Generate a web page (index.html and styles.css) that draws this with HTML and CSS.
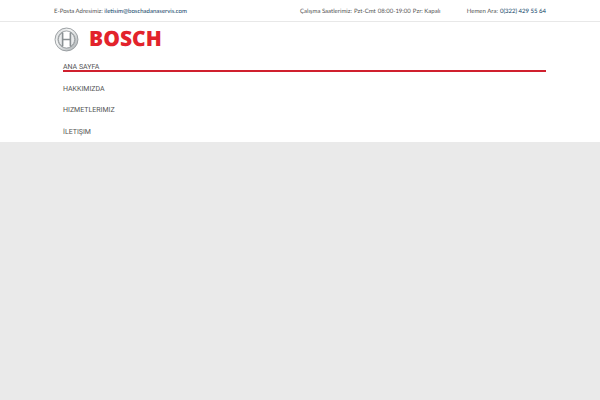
FILE: index.html
```
<!DOCTYPE html>
<html lang="tr">
<head>
<meta charset="utf-8">
<meta name="viewport" content="width=device-width, initial-scale=1">
<title>Bosch Adana Servis</title>
<link rel="stylesheet" href="styles.css">
</head>
<body>
<div class="topbar">
  <div class="container topbar-row">
    <p>E-Posta Adresimiz: <a href="mailto:iletisim@boschadanaservis.com">iletisim@boschadanaservis.com</a></p>
    <div class="topbar-info">
      <p class="spaced"><span>Çalışma Saatlerimiz:</span> <span>Pzt-Cmt</span> <span>08:00-19:00</span> <span>Pzr: Kapalı</span></p>
      <p class="spaced"><span>Hemen Ara:</span> <a href="tel:03224295564">0(322) 429 55 64</a></p>
    </div>
  </div>
</div>
<header class="header">
  <div class="container">
    <a class="logo" href="#">
      <svg class="emblem" viewBox="0 0 48 48" aria-hidden="true">
        <defs>
          <linearGradient id="metal" x1="0" y1="0" x2="1" y2="1">
            <stop offset="0" stop-color="#c9cdcf"/>
            <stop offset=".35" stop-color="#f7f8f8"/>
            <stop offset="1" stop-color="#a5abae"/>
          </linearGradient>
        </defs>
        <circle cx="24" cy="24" r="22" fill="url(#metal)" stroke="#8d9295" stroke-width="1.6"/>
        <circle cx="24" cy="24" r="16.5" fill="#fff" stroke="#8d9295" stroke-width="1.6"/>
        <path d="M16.5 10.5C11 14 8.500 19 8.500 24s2.500 10 8 13.500zM31.500 10.500C37 14 39.500 19 39.500 24s-2.500 10-8 13.500z" fill="#e9ebec" stroke="#8d9295" stroke-width="1.500"/>
        <path d="M16.500 10.500v27M31.500 10.500v27M16.500 24h15" fill="none" stroke="#8a9093" stroke-width="3"/>
      </svg>
      <span class="wordmark">BOSCH</span>
    </a>
    <nav class="nav">
      <a class="active" href="#">ANA SAYFA</a>
      <a href="#">HAKKIMIZDA</a>
      <a href="#">HIZMETLERIMIZ</a>
      <a href="#">İLETIŞIM</a>
    </nav>
  </div>
</header>
</body>
</html>
```
FILE: styles.css
```
* {
  box-sizing: border-box;
}

body {
  margin: 0;
  background: #eaeaea;
  color: #555;
  font: 6px/10px Lato, sans-serif;
  text-rendering: geometricPrecision;
}

a {
  color: inherit;
  text-decoration: none;
}

p {
  margin: 0;
}

.container {
  width: 82%;
  margin: 0 auto;
}

.topbar {
  background: #fff;
  border-bottom: 1px solid #e8e8e8;
}

.topbar-row {
  display: grid;
  grid-template-columns: 1fr 1fr;
  padding: 7px 0 4px;
}

.topbar a {
  color: #0f4266;
}

.topbar-info {
  display: flex;
  justify-content: space-between;
}

.spaced {
  display: flex;
  gap: 2px;
}

.header {
  padding-top: 4px;
  background: #fff;
}

.logo {
  display: flex;
  align-items: center;
  gap: 10px;
  height: 26px;
}

.emblem {
  width: 25px;
  height: 25px;
}

.wordmark {
  color: #e2232b;
  font: 900 21px/26px "Open Sans", sans-serif;
}

.nav {
  display: grid;
  grid-auto-rows: 1fr;
  align-items: start;
  min-height: 90px;
  padding: 4px 0 0 9px;
}

.nav a {
  padding-top: 8px;
  color: #555;
  font: 7px/6px Roboto, sans-serif;
}

.nav .active {
  border-bottom: 2px solid #d0202e;
}
```
